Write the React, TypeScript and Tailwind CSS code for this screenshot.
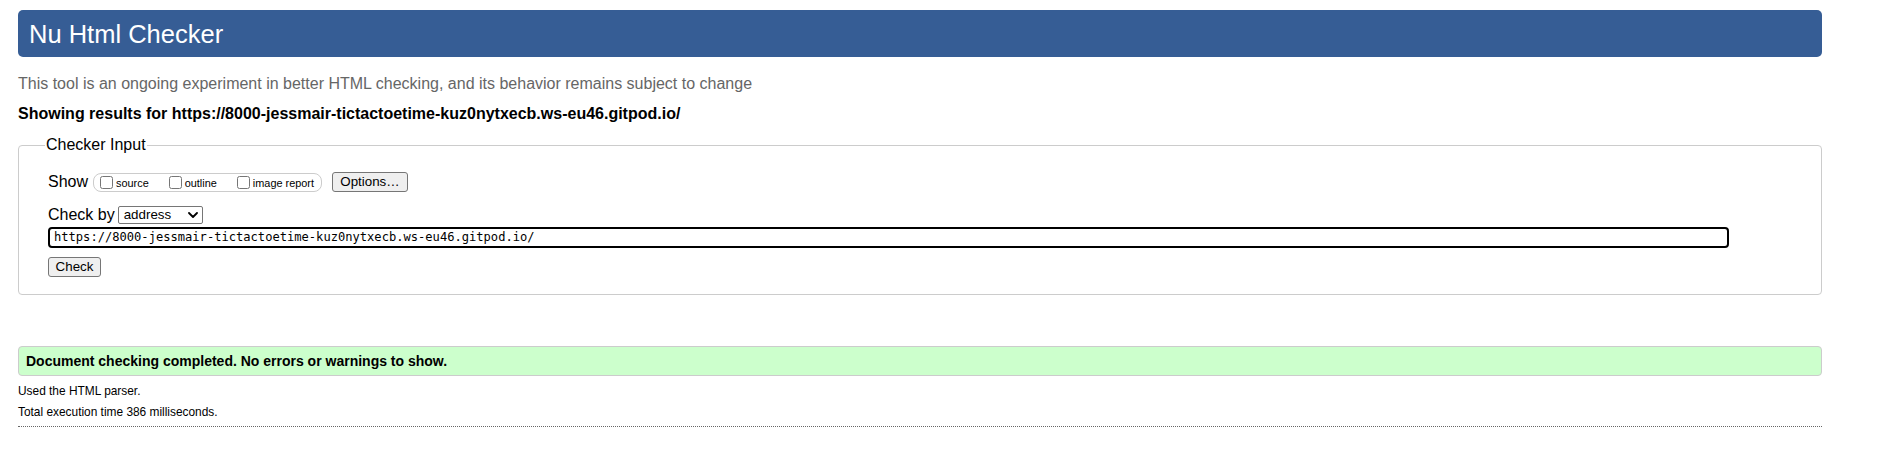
export default function App() {
  return (
    <div className="min-h-[462px] w-[1880px] bg-white font-['Liberation_Sans',Arial,sans-serif] text-black">
      <div className="ml-[18px] flex w-[1804px] flex-col">
        <header className="mt-[10px] flex h-[47px] items-center rounded-[5px] bg-[#365d95] pl-[11px]">
          <h1 className="text-[25.5px] leading-[30px] text-white">Nu Html Checker</h1>
        </header>
        <p className="mt-[18px] text-[16px] leading-[18px] text-[#666]">
          This tool is an ongoing experiment in better HTML checking, and its behavior remains subject to change
        </p>
        <p className="mt-[12px] text-[16px] font-bold leading-[18px]">
          Showing results for https://8000-jessmair-tictactoetime-kuz0nytxecb.ws-eu46.gitpod.io/
        </p>
        <fieldset className="mt-[13px] rounded-[4px] border border-[#cccccc] pb-[17px] pl-[26px] pr-[29px] pt-[18px]">
          <legend className="px-[1px] text-[16px] leading-[18px]">Checker Input</legend>
          <div className="flex flex-col pl-[3px]">
            <div className="flex h-[20px] items-center">
              <span className="text-[16px] leading-[18px]">Show</span>
              <div className="ml-[5px] flex h-[19px] items-center rounded-[8px] border border-[#cccccc] pr-[7px]">
                <input type="checkbox" className="ml-[6px] h-[13px] w-[13px]" />
                <span className="ml-[3px] mt-[3px] text-[10.9px] leading-[13px]">source</span>
                <input type="checkbox" className="ml-[20px] h-[13px] w-[13px]" />
                <span className="ml-[3px] mt-[3px] text-[10.9px] leading-[13px]">outline</span>
                <input type="checkbox" className="ml-[20px] h-[13px] w-[13px]" />
                <span className="ml-[3px] mt-[3px] text-[10.9px] leading-[13px]">image report</span>
              </div>
              <button className="ml-[10px] flex h-[20px] w-[76px] items-center justify-center rounded-[3px] border border-[#767676] bg-[#efefef] text-[13.33px] leading-none">
                Options…
              </button>
            </div>
            <div className="mt-[14px] flex h-[18px] items-center">
              <span className="text-[16px] leading-[18px]">Check by</span>
              <div className="ml-[3px] flex h-[18px] w-[85px] items-center justify-between rounded-[2px] border border-[#767676] pl-[5px] pr-[4px]">
                <span className="text-[13.33px] leading-none">address</span>
                <svg width="10" height="6" viewBox="0 0 10 6" className="block">
                  <path d="M1 1 L5 5 L9 1" fill="none" stroke="#000" strokeWidth="1.8" strokeLinecap="round" strokeLinejoin="round" />
                </svg>
              </div>
            </div>
            <div className="mt-[3px] flex h-[21px] w-[1681px] items-center rounded-[4px] border-2 border-black pl-[4px]">
              <span className="font-['DejaVu_Sans_Mono','Liberation_Mono',monospace] text-[12.1px] leading-none">
                https://8000-jessmair-tictactoetime-kuz0nytxecb.ws-eu46.gitpod.io/
              </span>
            </div>
            <div className="mt-[9px]">
              <button className="flex h-[20px] w-[53px] items-center justify-center rounded-[3px] border border-[#767676] bg-[#efefef] text-[13.33px] leading-none">
                Check
              </button>
            </div>
          </div>
        </fieldset>
        <div className="mt-[51px] flex h-[30px] items-center rounded-[4px] border border-[#cccccc] bg-[#ccffcc] pl-[7px]">
          <p className="text-[14px] font-bold leading-[16px]">Document checking completed. No errors or warnings to show.</p>
        </div>
        <p className="mt-[8px] text-[11.9px] leading-[14px]">Used the HTML parser.</p>
        <p className="mt-[7px] text-[11.9px] leading-[14px]">Total execution time 386 milliseconds.</p>
        <div className="mt-[7px] border-t border-dotted border-[#666]" />
      </div>
    </div>
  );
}
